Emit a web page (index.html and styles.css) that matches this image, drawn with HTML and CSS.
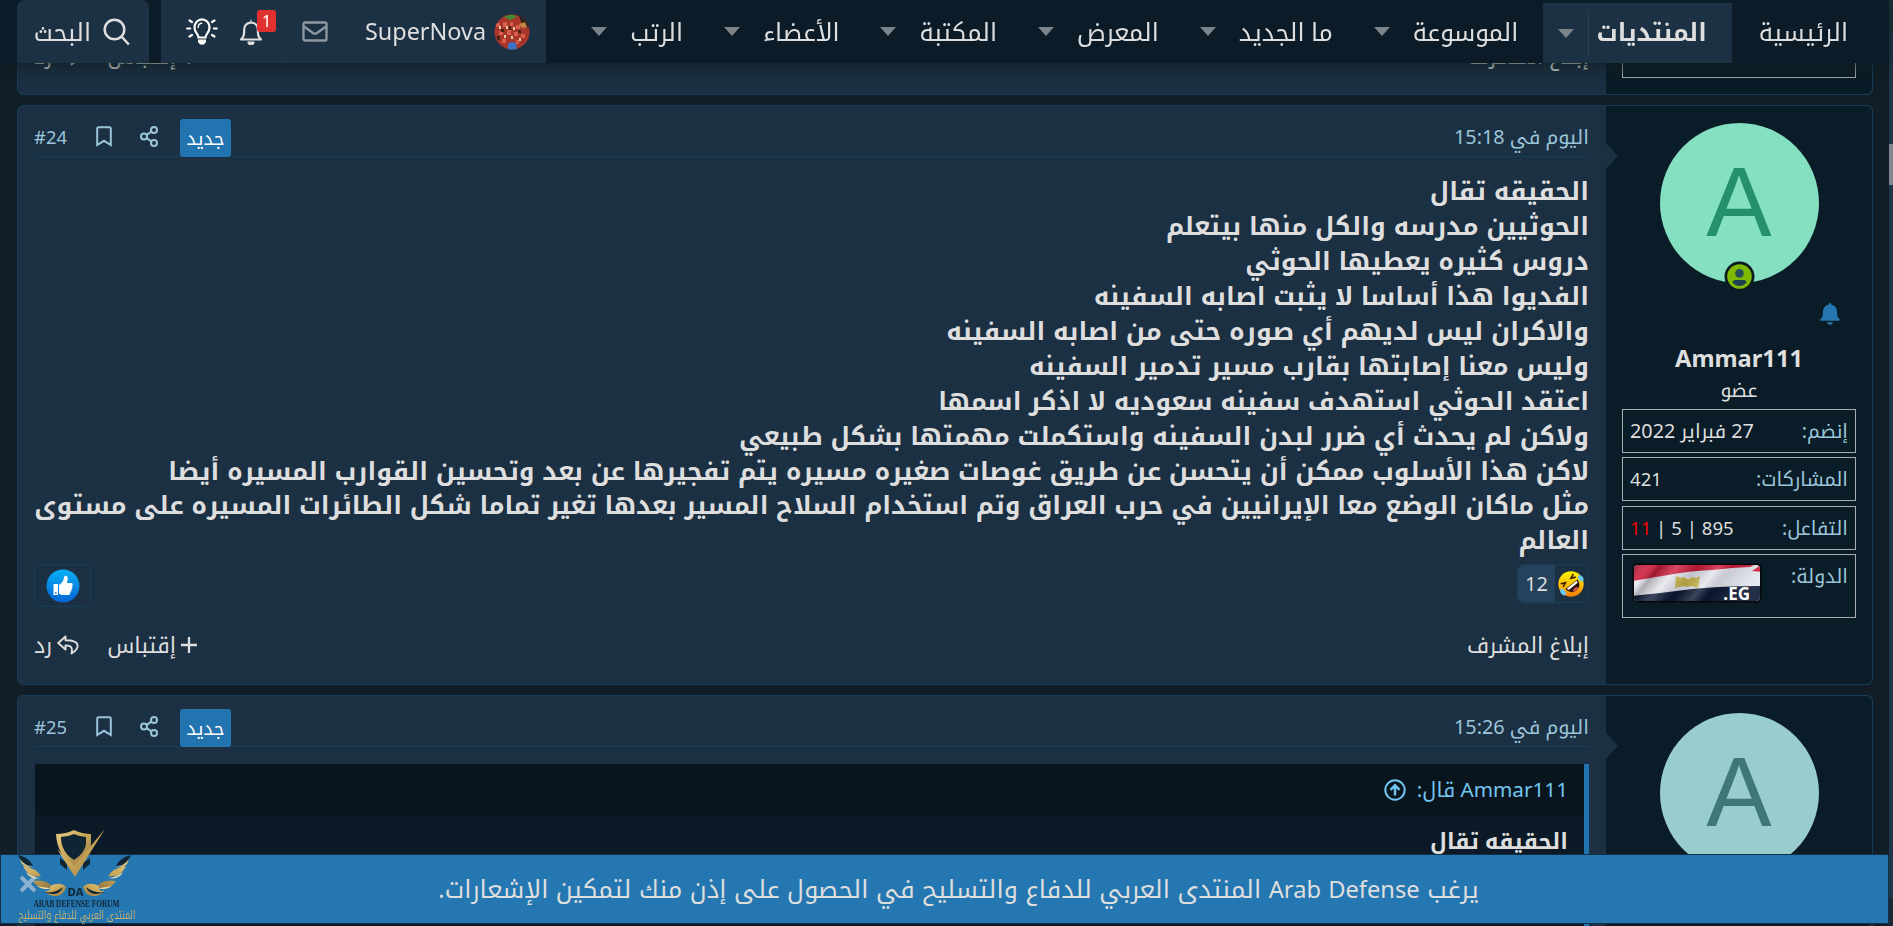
FILE: index.html
```
<!DOCTYPE html>
<html lang="ar" dir="rtl">
<head>
  <meta charset="UTF-8">
  <meta name="viewport" content="width=device-width, initial-scale=1.0">
  <title>المنتدى العربي للدفاع والتسليح</title>
  <link rel="stylesheet" href="styles.css">
</head>
<body>
  <svg width="0" height="0" class="sprite">
    <symbol id="i-share" viewBox="0 0 18 21">
      <g fill="none" stroke="currentColor" stroke-width="2"><circle cx="14" cy="4" r="3"/><circle cx="4" cy="10.500" r="3"/><circle cx="14" cy="17" r="3"/><path d="M6.600 8.900l4.800-3.200M6.600 12.100l4.800 3.200"/></g>
    </symbol>
    <symbol id="i-mark" viewBox="0 0 16 21">
      <path d="M1.200 19V2.500Q1.200 1.200 2.500 1.200h11q1.300 0 1.300 1.300V19L8 14.800z" fill="none" stroke="currentColor" stroke-width="2"/>
    </symbol>
    <symbol id="i-reply" viewBox="0 0 22 20">
      <path d="M8.500 1.500L1.200 8l7.300 6.500v-4c5-.3 7.500 1.500 6 8 5-3 6.500-6 6-8.500C20 6.200 15 5.300 8.500 5.300z" fill="none" stroke="currentColor" stroke-width="1.900" stroke-linejoin="round"/>
    </symbol>
    <symbol id="i-plus" viewBox="0 0 16 16">
      <path d="M8 0v16M0 8h16" stroke="currentColor" stroke-width="2.300"/>
    </symbol>
  </svg>

  <nav class="nav">
    <ul class="nav-list">
      <li class="nav-item"><a>الرئيسية</a></li>
      <li class="nav-item active"><a>المنتديات</a><i class="caret"></i></li>
      <li class="nav-item"><a>الموسوعة</a><i class="caret"></i></li>
      <li class="nav-item"><a>ما الجديد</a><i class="caret"></i></li>
      <li class="nav-item"><a>المعرض</a><i class="caret"></i></li>
      <li class="nav-item"><a>المكتبة</a><i class="caret"></i></li>
      <li class="nav-item"><a>الأعضاء</a><i class="caret"></i></li>
      <li class="nav-item"><a>الرتب</a><i class="caret"></i></li>
    </ul>
    <div class="account">
      <a class="member">
        <svg width="36" height="36" viewBox="0 0 36 36">
          <defs><clipPath id="round"><circle cx="18" cy="18" r="17.500"/></clipPath></defs>
          <g clip-path="url(#round)">
            <rect width="36" height="36" fill="#a8352a"/>
            <path d="M24 0h12v14l-7-2z" fill="#2b2016"/>
            <path d="M10 3l8-3 5 3-7 3z" fill="#3f8a33"/>
            <path d="M2 9h4v4H2zM9 8h4v5H9zM16 8h3v4h-3zM22 11h4v4h-4zM5 17h4v4H5zM13 16h4v5h-4zM20 18h4v4h-4zM27 20h4v4h-4zM8 25h4v4H8zM22 26h3v4h-3z" fill="#d8604a"/>
            <path d="M5 12h2v3H5zM12 12h2v3h-2zM19 13h2v3h-2zM10 21h2v3h-2zM17 22h2v3h-2zM25 24h2v3h-2z" fill="#e6c9a0"/>
            <path d="M7 15h3v3H7zM15 12h2v4h-2zM24 16h3v3h-3zM3 22h3v4H3z" fill="#4a2516"/>
            <path d="M14 30l3-2 5 1 1 7h-9z" fill="#3a74c8"/><path d="M25 10l6-2 2 5-5 1z" fill="#c08845"/>
          </g>
        </svg>
        <span>SuperNova</span>
      </a>
      <a class="mail">
        <svg width="26" height="21" viewBox="0 0 26 21" fill="none" stroke="#8f99a1" stroke-width="2.300"><rect x="1.500" y="1.500" width="23" height="18" rx="1.500"/><path d="M2 5.500l9 6.500q2 1.300 4 0l9-6.500"/></svg>
      </a>
      <a class="alerts">
        <svg width="24" height="27" viewBox="0 0 24 27"><path d="M2 21.500c2.800-2.500 3.200-4.500 3.200-10C5.200 7.500 8 4.600 12 4.600s6.800 2.900 6.800 6.900c0 5.500.4 7.500 3.200 10z" fill="none" stroke="#dedede" stroke-width="2.200" stroke-linejoin="round"/><path d="M12 1.500v3M8.800 24h6.400a3.200 3 0 0 1-6.400 0" fill="#dedede" stroke="#dedede"/></svg>
        <b class="count">1</b>
      </a>
      <a class="bulb">
        <svg width="32" height="27" viewBox="0 0 32 27"><g fill="none" stroke="#fff" stroke-width="2.200" stroke-linecap="round"><path d="M12.500 19.500c0-3.500-4-4.500-4-10A7.500 8 0 0 1 16 1.300a7.500 8 0 0 1 7.500 8.200c0 5.500-4 6.500-4 10z"/><path d="M1.200 10.500h3M27.800 10.500h3M3.500 2.500l2.500 1.500M28.500 2.500L26 4M3.500 18.500L6 17M28.500 18.500L26 17"/><path d="M12.200 9.500c0-2.500 1.300-4 3.500-4.200" stroke-width="1.400"/></g><path d="M12 21.500h8v2.500l-2 2.500h-4l-2-2.500z" fill="#fff"/></svg>
      </a>
    </div>
    <a class="search">
      <svg width="27" height="28" viewBox="0 0 27 28" fill="none" stroke="#dedede" stroke-width="2.500"><circle cx="11.500" cy="11.500" r="9.800"/><path d="M18.500 18.500l7.300 8"/></svg>
      <span>البحث</span>
    </a>
  </nav>

  <main class="posts">
    <article class="post post-prev">
      <aside class="user"><div class="stat stat-end"></div></aside>
      <div class="cell">
        <footer class="actions">
          <a>إبلاغ المشرف</a>
          <span class="actions-end"><a><svg class="plus" width="16" height="16"><use href="#i-plus"/></svg>إقتباس</a><a><svg width="22" height="20"><use href="#i-reply"/></svg>رد</a></span>
        </footer>
      </div>
    </article>

    <article class="post">
      <aside class="user">
        <div class="avatar">A
          <svg class="online" width="31" height="31" viewBox="0 0 31 31"><circle cx="15.500" cy="15.500" r="15" fill="#0b1b22"/><circle cx="15.500" cy="15.500" r="12.300" fill="#7fb900"/><circle cx="15.500" cy="12.400" r="4.300" fill="#25505a"/><path d="M8.500 21.500q0-2.500 3-2.500h8q3 0 3 2.500-3 3.500-7 3.500t-7-3.500z" fill="#1d4150"/></svg>
        </div>
        <div class="bell"><svg width="20" height="22" viewBox="0 0 20 22" fill="#2577b1"><path d="M10 0q1.500 0 1.500 1.700C15.500 2.500 17 5.500 17 9c0 4 .8 5.500 2.600 7.200.6.700.2 1.600-.6 1.600H1c-.8 0-1.200-.9-.6-1.600C2.200 14.500 3 13 3 9c0-3.500 1.500-6.500 5.500-7.300Q8.500 0 10 0zM7 19.300h6Q12.500 22 10 22t-3-2.700z"/></svg></div>
        <h4 class="name">Ammar111</h4>
        <h5 class="role">عضو</h5>
        <dl class="stat"><dt>إنضم:</dt><dd class="joined">27 فبراير 2022</dd></dl>
        <dl class="stat"><dt>المشاركات:</dt><dd>421</dd></dl>
        <dl class="stat"><dt>التفاعل:</dt><dd dir="ltr"><span class="neg">11</span> | 5 | 895</dd></dl>
        <dl class="stat country"><dt>الدولة:</dt><dd>
          <svg width="130" height="40" viewBox="0 0 130 40">
            <defs>
              <clipPath id="flagclip"><rect x="2" y="2" width="126" height="36" rx="4"/></clipPath>
              <linearGradient id="fold" x1="0" y1="0" x2="1" y2=".25"><stop offset="0" stop-color="#000" stop-opacity=".4"/><stop offset=".15" stop-color="#fff" stop-opacity=".1"/><stop offset=".22" stop-color="#000" stop-opacity=".25"/><stop offset=".35" stop-color="#fff" stop-opacity=".2"/><stop offset=".5" stop-color="#000" stop-opacity=".15"/><stop offset=".65" stop-color="#fff" stop-opacity=".2"/><stop offset=".75" stop-color="#000" stop-opacity=".12"/><stop offset="1" stop-color="#fff" stop-opacity=".1"/></linearGradient>
            </defs>
            <rect x=".5" y=".5" width="129" height="39" rx="5" fill="#07080c"/>
            <g clip-path="url(#flagclip)">
              <rect width="130" height="40" fill="#e4e6ee"/>
              <path d="M0 0h126l-8 4-18 1-20 2q-24 1-44 5L0 18z" fill="#cf1c3c"/>
              <path d="M120 8l10-7v8z" fill="#cf1c3c"/>
              <path d="M0 33q30-3 60-7 30-3 70-3v17H0z" fill="#0b1733"/>
              <path d="M44 13l5 2 3-1 4 3 4-3 4 1 4-2-2 12-7-2-4 1-4-1-8 2z" fill="#cdb94b"/>
              <rect width="130" height="40" fill="url(#fold)"/>
            </g>
            <text x="118" y="37" text-anchor="end" direction="ltr" class="flag-code">.EG</text>
          </svg></dd></dl>
      </aside>
      <div class="cell">
        <header class="post-head">
          <time>اليوم في 15:18</time>
          <div class="tools"><span class="new">جديد</span><svg class="t-share" width="18" height="21"><use href="#i-share"/></svg><svg class="t-mark" width="16" height="21"><use href="#i-mark"/></svg><span class="num" dir="ltr">#24</span></div>
        </header>
        <div class="message">
          الحقيقه تقال<br>
          الحوثيين مدرسه والكل منها بيتعلم<br>
          دروس كثيره يعطيها الحوثي<br>
          الفديوا هذا أساسا لا يثبت اصابه السفينه<br>
          والاكران ليس لديهم أي صوره حتى من اصابه السفينه<br>
          وليس معنا إصابتها بقارب مسير تدمير السفينه<br>
          اعتقد الحوثي استهدف سفينه سعوديه لا اذكر اسمها<br>
          ولاكن لم يحدث أي ضرر لبدن السفينه واستكملت مهمتها بشكل طبيعي<br>
          لاكن هذا الأسلوب ممكن أن يتحسن عن طريق غوصات صغيره مسيره يتم تفجيرها عن بعد وتحسين القوارب المسيره أيضا<br>
          مثل ماكان الوضع معا الإيرانيين في حرب العراق وتم استخدام السلاح المسير بعدها تغير تماما شكل الطائرات المسيره على مستوى<br>
          العالم
        </div>
        <div class="reactions">
          <div class="react">
            <svg width="26" height="26" viewBox="0 0 26 26"><defs><linearGradient id="lol" x1="0" y1="0" x2="0" y2="1"><stop offset="0" stop-color="#fff200"/><stop offset=".5" stop-color="#ffc400"/><stop offset="1" stop-color="#f57a00"/></linearGradient></defs><circle cx="13" cy="13" r="12.700" fill="url(#lol)"/><g transform="rotate(-38 13 13)"><path d="M5.500 13.500h15.500q-1 8-7.800 8t-7.700-8z" fill="#24120c"/><path d="M7 14h12.500l-.5 2.200H7.500z" fill="#fff"/><path d="M9.500 20q3.500-3 7.500 0-3.500 2.300-7.500 0z" fill="#e8505f"/><path d="M5 6.500l4.500 2L5 10.500M21 6.500l-4.500 2 4.500 2" fill="none" stroke="#3a2408" stroke-width="1.600"/><ellipse cx="1.800" cy="14.500" rx="2.300" ry="3.600" fill="#6cc8f5"/><ellipse cx="24.200" cy="14.500" rx="2.300" ry="3.600" fill="#6cc8f5"/></g></svg>
            <span class="react-count">12</span>
          </div>
          <div class="like">
            <svg width="34" height="34" viewBox="0 0 34 34"><defs><linearGradient id="lk" x1="0" y1="0" x2="0" y2="1"><stop offset="0" stop-color="#08b0f5"/><stop offset="1" stop-color="#0563d4"/></linearGradient></defs><circle cx="17" cy="17" r="16.500" fill="url(#lk)"/><path d="M7.500 15h4.500v11H7.500zM13 16c3-2 4.500-4.500 5-7.500.2-2.500 3.500-2.500 3.700.5.200 2-.5 3.500-.8 5h4.200c2 0 2.200 2.400.9 3.100.8 1.200.5 2.400-.6 3 .5 1.200.1 2.300-1 2.800.2 1.900-.8 3.100-2.900 3.100h-4.500q-2 0-4-1.500z" fill="#fff"/><circle cx="9.800" cy="23.800" r=".9" fill="#0a7ae0"/></svg>
          </div>
        </div>
        <footer class="actions">
          <a>إبلاغ المشرف</a>
          <span class="actions-end"><a><svg class="plus" width="16" height="16"><use href="#i-plus"/></svg>إقتباس</a><a><svg width="22" height="20"><use href="#i-reply"/></svg>رد</a></span>
        </footer>
      </div>
    </article>

    <article class="post">
      <aside class="user"><div class="avatar avatar-2">A</div></aside>
      <div class="cell">
        <header class="post-head">
          <time>اليوم في 15:26</time>
          <div class="tools"><span class="new">جديد</span><svg class="t-share" width="18" height="21"><use href="#i-share"/></svg><svg class="t-mark" width="16" height="21"><use href="#i-mark"/></svg><span class="num" dir="ltr">#25</span></div>
        </header>
        <blockquote class="quote">
          <div class="quote-head">Ammar111 قال: <svg width="22" height="22" viewBox="0 0 22 22" fill="none" stroke="#74c6f2" stroke-width="2"><circle cx="11" cy="11" r="9.700"/><path d="M11 16.500V6.500M6.500 10.800L11 6.300l4.500 4.500" stroke-width="2.400"/></svg></div>
          <div class="quote-text">الحقيقه تقال</div>
        </blockquote>
      </div>
    </article>
  </main>

  <div class="notice">
    <p>يرغب <span class="site">Arab Defense</span> المنتدى العربي للدفاع والتسليح في الحصول على إذن منك لتمكين الإشعارات.</p>
    <svg class="close" width="18" height="18" viewBox="0 0 18 18"><path d="M2 2l14 14M16 2L2 16" stroke="#8bb0cf" stroke-width="4"/></svg>
  </div>

  <svg class="logo" width="124" height="97" viewBox="0 0 124 97">
    <defs>
      <linearGradient id="gold" x1="0" y1="0" x2="1" y2="1"><stop offset="0" stop-color="#e9cb83"/><stop offset=".5" stop-color="#c9a657"/><stop offset="1" stop-color="#8f7340"/></linearGradient>
      <g id="wing">
        <path d="M1 26q12 3 15 11Q5 37 1 26z" fill="#102533"/>
        <path d="M3 30q5 7 13 8-7 1-11-3zM6 37q13 2 18 10Q11 49 6 37zM16 52q14-2 19 6-12 5-19-6z" fill="url(#gold)"/>
        <path d="M9 43q8 6 15 6-11 2-15-6zM20 57q10 2 15 2-9 3-15-2z" fill="#f0dba4"/>
        <path d="M33 57q10-5 16 1-3 10-12 9-7-1-9-5 6 1 5-5z" fill="url(#gold)"/>
        <path d="M26 63q12 2 20-5-4 11-20 5z" fill="#102533"/>
      </g>
    </defs>
    <use href="#wing"/>
    <use href="#wing" transform="translate(115 0) scale(-1 1)"/>
    <path d="M43 29l7 5v7l-7-6zM73 29l-7 5v7l7-6z" fill="#102533"/>
    <path d="M39 5q10 0 18-4 8 4 17 4v9q0 12-17 24Q40 26 39 5z" fill="url(#gold)"/>
    <path d="M44 8q7 0 13-3 6 3 12 3v6q0 9-12 17Q44 23 44 8z" fill="#102533"/>
    <path d="M40 20l17 17L88 0 58 48z" fill="url(#gold)"/>
    <text x="58.500" y="67" class="logo-da">DA</text>
    <text x="59.500" y="78" class="logo-en" textLength="86" lengthAdjust="spacingAndGlyphs">ARAB DEFENSE FORUM</text>
    <text x="60" y="90" class="logo-ar" textLength="117" lengthAdjust="spacingAndGlyphs">المنتدى العربي للدفاع والتسليح</text>
  </svg>
  <div class="scrollbar"></div>
</body>
</html>
```
FILE: styles.css
```
* {
  box-sizing: border-box;
}

body {
  margin: 0;
  height: 926px;
  overflow: hidden;
  background: #111d27;
  color: #dedede;
  font-family: "Noto Sans", "Noto Kufi Arabic", "Noto Sans Arabic", "DejaVu Sans", sans-serif;
  font-size: 19.800px;
}

h4, h5, dl, dd, p, ul, blockquote {
  margin: 0;
  padding: 0;
}

svg {
  display: block;
  flex: none;
}

.sprite {
  position: absolute;
}

/* top bar */
.nav {
  position: fixed;
  z-index: 10;
  top: 0;
  left: 0;
  right: 4px;
  height: 63px;
  display: flex;
  padding: 0 16px 0 17px;
  background: #0b1b27;
  box-shadow: 0 4px 16px rgba(16, 30, 30, .8);
  font-size: 24.500px;
  line-height: 63px;
}

.nav-list {
  display: flex;
  list-style: none;
  margin-left: auto;
}

.nav-item {
  display: flex;
  white-space: nowrap;
}

.nav-item a {
  padding: 0 25px 0 7px;
}

.nav-item:first-child a {
  padding-left: 27px;
}

.nav-item.active {
  margin-top: 3px;
  line-height: 57px;
  background: #1c3144;
  font-weight: bold;
}

.caret {
  width: 48px;
  display: flex;
  align-items: center;
  justify-content: center;
}

.active .caret {
  width: 46px;
  margin: 7px 0;
  border-right: 1px solid #2b4053;
}

.caret::after {
  content: "";
  border: 8px solid transparent;
  border-top: 9px solid #7d8489;
  border-bottom: 0;
}

.account {
  display: flex;
  align-items: center;
  width: 385px;
  background: #1c3144;
}

.member {
  display: flex;
  align-items: center;
  gap: 8px;
  width: 190px;
  padding-right: 16px;
  font-size: 23.400px;
}

.mail {
  width: 71px;
  height: 63px;
  display: flex;
  align-items: center;
  padding-right: 28px;
  border-left: 1px solid #1f3444;
}

.alerts {
  position: relative;
  width: 62px;
  padding-right: 22px;
}

.count {
  position: absolute;
  top: -8px;
  left: 34px;
  width: 19px;
  height: 22px;
  border-radius: 3px;
  background: #e03030;
  color: #fff;
  font-size: 17px;
  font-weight: normal;
  line-height: 21px;
  text-align: center;
}

.bulb {
  padding-right: 5px;
}

.search {
  display: flex;
  align-items: center;
  gap: 12px;
  width: 132px;
  margin-right: 12px;
  padding-right: 19px;
  border-radius: 8px 8px 0 0;
  background: #1c3144;
}

/* posts */
.posts {
  display: flex;
  flex-direction: column;
  gap: 10px;
  height: 926px;
  overflow: hidden;
  padding: 0 20px 0 17px;
}

.post {
  display: flex;
  flex: none;
  border: 1px solid #173e58;
  border-radius: 6px;
  background: #1b3043;
}

.post:nth-child(2) {
  height: 580px;
}

.post:nth-child(3) {
  height: 231px;
  border-bottom: 0;
  border-radius: 6px 6px 0 0;
}

.post-prev {
  height: 95px;
  border-radius: 0 0 6px 6px;
}

.post-prev .cell {
  display: flex;
  flex-direction: column;
  justify-content: flex-end;
}

.post-prev .actions {
  height: 64px;
}

.user {
  position: relative;
  width: 266px;
  padding: 17px 16px 0 16px;
  border-radius: 0 6px 6px 0;
  background: #0a1c27;
}

.post:not(.post-prev) .user::after {
  content: "";
  position: absolute;
  top: 37px;
  right: 254px;
  border: 13px solid transparent;
  border-right: 0;
  border-left: 12px solid #1b3043;
}

.avatar {
  position: relative;
  width: 159px;
  height: 160px;
  margin: 0 auto;
  border-radius: 50%;
  background: #85e0c1;
  color: #24916b;
  font: 98px/158px "Liberation Sans", sans-serif;
  text-align: center;
}

.avatar-2 {
  background: #99cccc;
  color: #3d7877;
}

.online {
  position: absolute;
  bottom: -9px;
  left: 64px;
}

.bell {
  height: 51px;
  padding: 20px 16px 0 0;
}

.name {
  font-size: 23.700px;
  line-height: 48px;
  text-align: center;
}

.role {
  height: 27px;
  font-size: 19.400px;
  font-weight: normal;
  line-height: 16px;
  text-align: center;
}

.stat {
  display: flex;
  justify-content: space-between;
  height: 44px;
  margin-bottom: 4.300px;
  padding: 0 7px;
  border: 1px solid #a9adb0;
  font-size: 19.500px;
  line-height: 42px;
}

.stat dt {
  color: #9bc5da;
}

.stat dd {
  font-size: 18.600px;
}

.stat .joined {
  font-size: 19.800px;
}

.country {
  height: 64px;
}

.country svg {
  margin: 8px 2px;
}

.neg {
  color: #f00000;
}

.flag-code {
  fill: #fff;
  font: bold 17px "Open Sans", sans-serif;
}

.stat-end {
  margin-top: 16px;
}

.cell {
  flex: 1;
  padding: 0 17px 0 16px;
}

.post-head {
  display: flex;
  align-items: center;
  justify-content: space-between;
  height: 51px;
  border-bottom: 1px solid #173e58;
  color: #9bc5da;
  line-height: 38px;
  padding-top: 13px;
}

.post-head time {
  margin-top: -2px;
}

.tools {
  display: flex;
  align-items: center;
}

.new {
  width: 51px;
  border-radius: 3px;
  background: #2274b0;
  color: #fff;
  font-size: 18.200px;
  text-align: center;
}

.t-share {
  margin: -3px 22px 0 0;
}

.t-mark {
  margin: -3px 28px 0 0;
}

.num {
  margin: -2px 29px 0 0;
  font-size: 18.400px;
}

.message {
  margin-top: 16px;
  font-size: 25.200px;
  font-weight: bold;
  line-height: 34.930px;
  word-spacing: 1.130px;
  white-space: nowrap;
}

.reactions {
  display: flex;
  align-items: flex-start;
  justify-content: space-between;
  height: 60px;
  padding-top: 7px;
}

.react,
.like {
  display: flex;
  align-items: center;
  border: 1px solid #173e58;
  border-radius: 6px;
}

.react {
  width: 72px;
  height: 39px;
  justify-content: space-between;
  padding-right: 4px;
}

.react-count {
  width: 37px;
  border-radius: 6px 0 0 6px;
  background: #24425b;
  font-size: 20px;
  line-height: 37px;
  text-align: center;
}

.like {
  width: 57px;
  height: 43px;
  justify-content: center;
}

.actions {
  display: flex;
  justify-content: space-between;
  height: 76px;
  font-size: 21.800px;
  line-height: 52px;
}

.message ~ .actions {
  padding-top: 2px;
}

.actions-end {
  display: flex;
  gap: 28px;
}

.actions-end a {
  display: flex;
  align-items: center;
  height: 52px;
  gap: 5px;
}

.quote {
  height: 162px;
  margin: 17px 0 0 1px;
  border-right: 5px solid #2174af;
  background: #0b1a26;
}

.quote-head {
  display: flex;
  align-items: center;
  gap: 11px;
  height: 51px;
  padding-right: 16px;
  background: #08151d;
  color: #74c6f2;
  font-size: 20.700px;
}

.quote-text {
  padding-right: 16px;
  font-size: 22px;
  font-weight: bold;
  line-height: 50px;
}

/* push permission bar */
.notice {
  position: fixed;
  left: 0;
  right: 4px;
  top: 854px;
  height: 70px;
  border: 1px solid #123049;
  background: #2577b1;
  font-size: 25px;
  line-height: 66px;
  text-align: center;
}

.notice p {
  padding-left: 28px;
  word-spacing: 1px;
  white-space: nowrap;
}

.site {
  font-size: 23.700px;
}

.close {
  position: absolute;
  left: 18px;
  top: 20px;
}

.logo {
  position: fixed;
  left: 17px;
  top: 829px;
  direction: ltr;
  overflow: visible;
}

.logo text {
  text-anchor: middle;
}

.logo-da {
  fill: #102533;
  font: bold 10px "DejaVu Sans", sans-serif;
}

.logo-en {
  fill: #102533;
  font: bold 10px "Liberation Serif", serif;
}

.logo-ar {
  fill: #c4b16f;
  font: 11.500px "Noto Kufi Arabic", "DejaVu Sans", sans-serif;
}

.scrollbar {
  position: fixed;
  top: 0;
  right: 0;
  width: 4px;
  height: 926px;
  background: linear-gradient(#1c303c 33px, #203649 33px, #203649 144px, #7f8790 144px, #7f8790 185px, #203649 185px, #203649 898px, #182a38 898px);
}
```
